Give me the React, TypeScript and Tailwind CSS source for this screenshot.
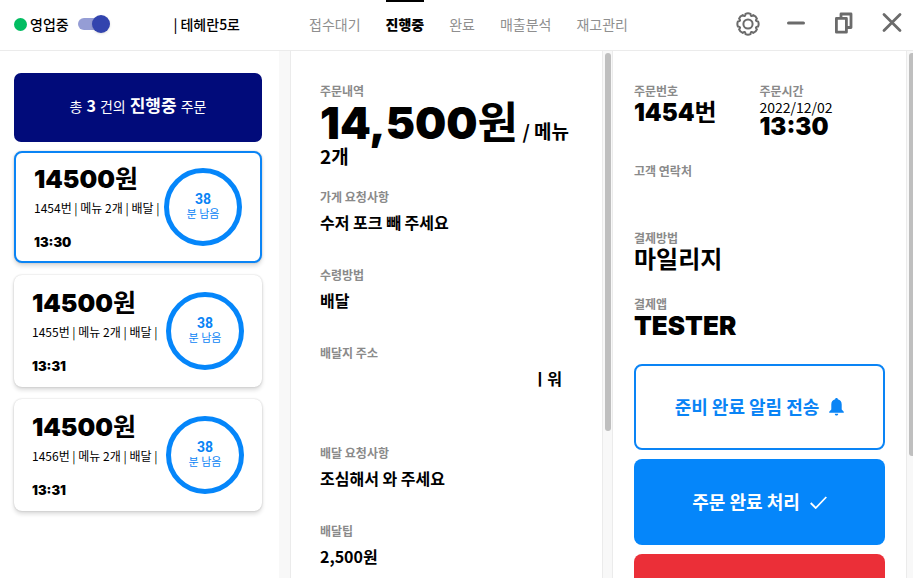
import React from "react";

const kr = "font-['Noto_Sans_CJK_KR',sans-serif]";
const display = "font-['Inter','Noto_Sans_CJK_KR',sans-serif] font-black";

const tabs = ["접수대기", "진행중", "완료", "매출분석", "재고관리"];

const orders = [
  { id: 1454, time: "13:30", active: true },
  { id: 1455, time: "13:31", active: false },
  { id: 1456, time: "13:31", active: false },
];

function polar(radius: number, degrees: number) {
  const a = (degrees * Math.PI) / 180;
  return `${(12 + radius * Math.cos(a)).toFixed(2)} ${(12 + radius * Math.sin(a)).toFixed(2)}`;
}

// Eight rounded lobes, each joined to the next by a shallow notch.
const gearPath =
  `M${polar(10.4, -14)}` +
  Array.from({ length: 8 }, (_, i) => {
    const t = i * 45;
    return `Q${polar(11.2, t)} ${polar(10.4, t + 14)}Q${polar(7, t + 22.5)} ${polar(10.4, t + 31)}`;
  }).join("") +
  "Z";

function GearIcon() {
  return (
    <svg width="24" height="24" viewBox="0 0 24 24" fill="none" stroke="#6b6b6b" strokeWidth="2" strokeLinejoin="round">
      <path d={gearPath} />
      <circle cx="12" cy="12" r="4.600" />
    </svg>
  );
}

function Header() {
  return (
    <header className="flex h-[51px] shrink-0 items-center border-b border-[#ebebeb] pr-[9px] pl-[14px] text-sm">
      <div className="flex w-[289px] shrink-0 items-center pb-[2px]">
        <span className="size-[13px] rounded-full bg-[#02bd62]" />
        <label htmlFor="open" className="ml-[3px] pb-px font-medium">영업중</label>
        <span className="relative ml-[9px] flex h-[18px] w-8 items-center">
          <input id="open" type="checkbox" defaultChecked className="absolute inset-0 z-10 cursor-pointer opacity-0" />
          <span className="h-3 w-[30px] rounded-full bg-[#959dd5]" />
          <span className="absolute right-0 size-[18px] rounded-full bg-[#3244ae] shadow-sm" />
        </span>
        <span className="mr-[63px] ml-auto pb-px font-medium">| 테헤란5로</span>
      </div>
      <nav className="flex h-full gap-[25px] pl-[6px]">
        {tabs.map((tab) => (
          <button
            key={tab}
            type="button"
            className={
              tab === "진행중"
                ? "h-full border-t-2 border-black pb-[5px] font-black"
                : "h-full pb-[3px] text-[#8f8f8f]"
            }
          >
            {tab}
          </button>
        ))}
      </nav>
      <div className="ml-auto flex items-center gap-[24px] pb-[2px]">
        <button type="button" aria-label="설정"><GearIcon /></button>
        <button type="button" aria-label="최소화">
          <svg width="24" height="24" viewBox="0 0 24 24" stroke="#6b6b6b" strokeWidth="3" strokeLinecap="round"><path d="M4.500 11h15" /></svg>
        </button>
        <button type="button" aria-label="이전 크기로">
          <svg width="24" height="24" viewBox="0 0 24 24" fill="none" stroke="#6b6b6b" strokeWidth="2.800" strokeLinejoin="round"><path d="M4.400 6.400h10v13.800h-10z" /><path d="M9 6V2h10v13.500h-4" /></svg>
        </button>
        <button type="button" aria-label="닫기">
          <svg width="24" height="24" viewBox="0 0 24 24" stroke="#6b6b6b" strokeWidth="2.800" strokeLinecap="round"><path d="m4 2.500 16 16M20 2.500l-16 16" /></svg>
        </button>
      </div>
    </header>
  );
}

function OrderCard({ id, time, active }: { id: number; time: string; active: boolean }) {
  return (
    <button
      type="button"
      className={`flex h-28 w-full items-center justify-between rounded-lg bg-white px-[18px] text-left shadow-[0_0_2px_rgba(0,0,0,0.2),0_3px_4px_rgba(0,0,0,0.14)] ${active ? "border-2 border-[#0a84f5]" : ""}`}
    >
      <span className="flex flex-col whitespace-nowrap">
        <span className={`${display} text-[25px] leading-[34px]`}>14500<span className="font-bold">원</span></span>
        <span className="text-xs leading-6">{id}번 | 메뉴 2개 | 배달 |</span>
        <span className={`${display} mt-3 text-[13px] leading-5`}>{time}</span>
      </span>
      <span className="flex size-[78px] shrink-0 flex-col items-center justify-center rounded-full border-[5px] border-[#0586fa] pb-[2px] text-[#0a84f5]">
        <span className="font-[Roboto] text-sm leading-[14px] font-bold">38</span>
        <span className="text-[11px] leading-[14px]">분 남음</span>
      </span>
    </button>
  );
}

function Label({ children }: { children: React.ReactNode }) {
  return <h3 className="text-xs leading-[18px] font-bold text-[#8a8a8a]">{children}</h3>;
}

function Field({ label, children }: { label: string; children: React.ReactNode }) {
  return (
    <section>
      <Label>{label}</Label>
      <div className="mt-1 text-base leading-6 font-bold">{children}</div>
    </section>
  );
}

export default function App() {
  return (
    <div className={`${kr} flex h-screen flex-col overflow-hidden bg-white text-black`}>
      <Header />
      <main className="grid min-h-0 flex-1 grid-cols-[290fr_323fr_300fr] grid-rows-1">
        <div className="flex min-w-0 overflow-hidden">
          <div className="flex min-w-0 flex-1 flex-col pt-[22px] pr-[17px] pl-[14px]">
            <div className="flex h-[69px] shrink-0 items-center justify-center rounded-[7px] bg-[#010b7a] pb-1 text-white">
              <p className="flex items-baseline gap-1 text-sm">
                <span>총</span>
                <b className="text-base">3</b>
                <span>건의</span>
                <b className="text-[17px]">진행중</b>
                <span>주문</span>
              </p>
            </div>
            <div className="mt-[9px] flex flex-col gap-3">
              {orders.map((o) => <OrderCard key={o.id} {...o} />)}
            </div>
          </div>
          <div className="w-[11px] bg-[#f8f8f8]" />
        </div>

        <div className="flex min-w-0 overflow-hidden border-l border-[#ebebeb]">
          <div className="min-w-0 flex-1 px-[29px] pt-[31px]">
            <section>
              <Label>주문내역</Label>
              <p className="text-[19px] leading-5 font-bold break-keep">
                <span className={`${display} text-[44px] leading-[46px]`}>14,500<span className="font-bold">원</span></span> / 메뉴 2개
              </p>
            </section>
            <div className="mt-[22px] flex flex-col gap-8">
              <Field label="가게 요청사항">수저 포크 빼 주세요</Field>
              <Field label="수령방법">배달</Field>
              <Field label="배달지 주소"><p className="h-[46px] pr-[11px] text-right">ㅣ워</p></Field>
              <Field label="배달 요청사항">조심해서 와 주세요</Field>
              <Field label="배달팁">2,500원</Field>
            </div>
          </div>
          <div className="w-[11px] shrink-0 border-x border-[#ebebeb] bg-[#f8f8f8] px-[2px] pt-[2px]">
            <div className="h-[378px] w-[6px] rounded-full bg-[#bfbfbf]" />
          </div>
        </div>

        <div className="flex min-w-0 overflow-hidden">
          <div className="min-w-0 flex-1 px-[21px] pt-[31px]">
            <div className="grid grid-cols-2">
              <section>
                <Label>주문번호</Label>
                <p className={`${display} text-2xl leading-[26px]`}>1454<span className="font-bold">번</span></p>
              </section>
              <section>
                <Label>주문시간</Label>
                <p className="text-sm leading-[14px]">2022/12/02</p>
                <p className={`${display} text-2xl leading-[26px]`}>13:30</p>
              </section>
            </div>
            <section className="mt-[22px] h-[67px]"><Label>고객 연락처</Label></section>
            <section>
              <Label>결제방법</Label>
              <p className="text-2xl leading-[22px] font-bold">마일리지</p>
            </section>
            <section className="mt-[26px]">
              <Label>결제앱</Label>
              <p className={`${display} text-[26px] leading-[26px]`}>TESTER</p>
            </section>
            <div className="mt-[25px] flex flex-col gap-[9px] text-lg font-bold">
              <button type="button" className="flex h-[86px] items-center justify-center gap-[10px] rounded-lg border-2 border-[#0a84f5] text-[#0a84f5]">
                <span className="pb-[3px]">준비 완료 알림 전송</span>
                <svg width="15" height="18" viewBox="0 0 15 18" fill="currentColor"><path d="M7.500 0c.8 0 1.300.500 1.300 1.200 2.500.600 3.900 2.600 3.900 5.200v5l2.100 2.300v1.100H.2v-1.100l2.100-2.300v-5c0-2.600 1.400-4.600 3.900-5.200C6.200.500 6.700 0 7.500 0zM5.800 15.700h3.400c0 1-.700 1.800-1.700 1.800s-1.700-.800-1.700-1.800z" /></svg>
              </button>
              <button type="button" className="flex h-[86px] items-center justify-center gap-[10px] rounded-lg bg-[#0586fa] text-white">
                <span className="pb-[3px]">주문 완료 처리</span>
                <svg width="17" height="13" viewBox="0 0 17 13" fill="none" stroke="currentColor" strokeWidth="1.800"><path d="m.7 7 5 5L16.300 1" /></svg>
              </button>
              <button type="button" aria-label="주문 취소" className="h-[86px] rounded-lg bg-[#eb2f38]" />
            </div>
          </div>
          <div className="w-[7px] shrink-0 overflow-hidden border-l border-[#ebebeb] bg-[#f8f8f8] pt-[2px] pl-[2px]">
            <div className="h-[403px] w-[6px] rounded-full bg-[#bfbfbf]" />
          </div>
        </div>
      </main>
    </div>
  );
}
